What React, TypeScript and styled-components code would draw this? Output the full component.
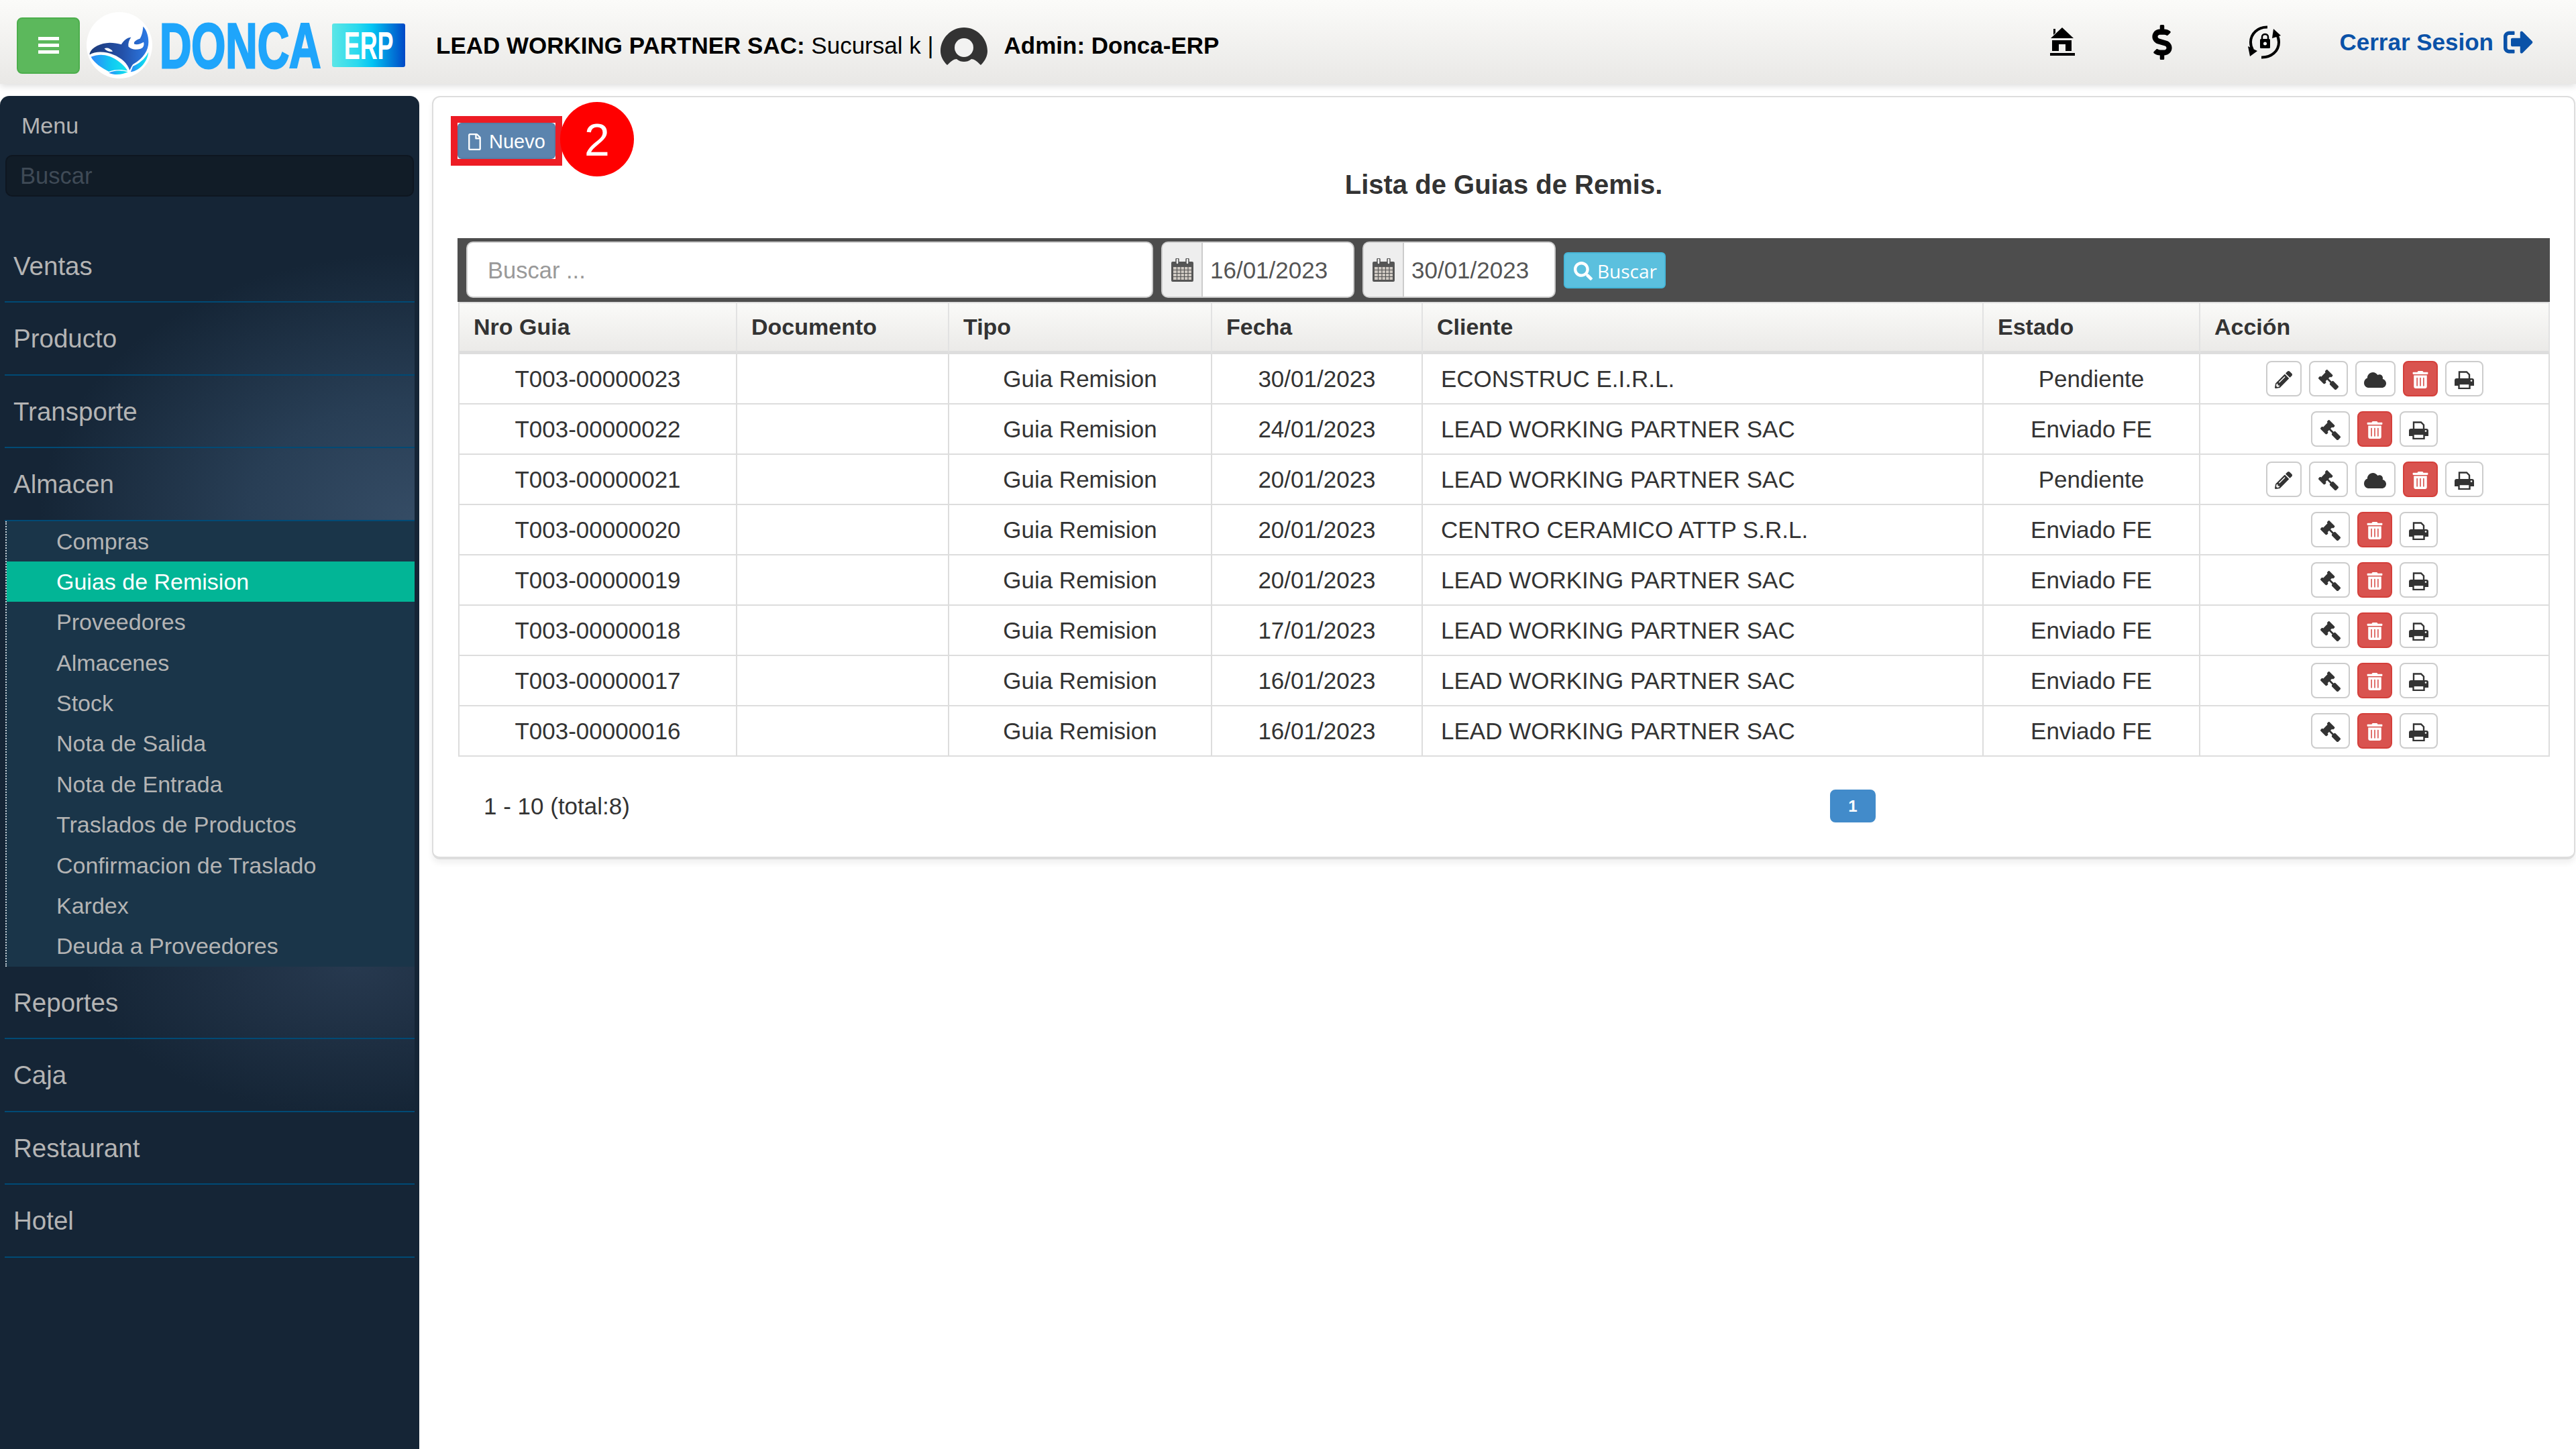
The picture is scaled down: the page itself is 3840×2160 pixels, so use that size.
import styled, { createGlobalStyle } from 'styled-components';
import {
  FaCloud,
  FaDollarSign,
  FaGavel,
  FaPencilAlt,
  FaRegFile,
  FaSearch,
  FaSignOutAlt,
  FaTrashAlt,
} from 'react-icons/fa';

const GlobalStyle = createGlobalStyle`
  html, body {
    margin: 0;
    padding: 0;
    background: #fff;
    font-family: "Liberation Sans", Arial, sans-serif;
    color: #333;
  }
  * { box-sizing: border-box; }
`;

const Page = styled.div`
  height: 100vh;
  overflow: hidden;
  display: flex;
  flex-direction: column;
`;

/* top bar */
const TopBar = styled.header`
  height: 125px;
  flex: none;
  display: flex;
  align-items: center;
  padding: 10px 64px 0 25px;
  background: linear-gradient(#fbfbf9, #e9e8e6);
  box-shadow: 0 3px 10px rgba(0, 0, 0, 0.14);
  position: relative;
`;

const MenuToggle = styled.button`
  width: 94px;
  height: 84px;
  padding: 0;
  display: flex;
  flex-direction: column;
  align-items: center;
  justify-content: center;
  gap: 5px;
  background: #5cb85c;
  border: 2px solid #4cae4c;
  border-radius: 8px;
`;

const ToggleBar = styled.span`
  width: 31px;
  height: 5px;
  background: #fff;
`;

const LogoMark = styled.svg`
  width: 98px;
  height: 99px;
  margin-left: 10px;
  flex: none;
`;

const LogoWord = styled.span`
  width: 244px;
  margin-left: 11px;
  flex: none;
  font-size: 95px;
  line-height: 84px;
  font-weight: 700;
  color: #1fa5fb;
  -webkit-text-stroke: 3px #1fa5fb;
  white-space: nowrap;
  transform: scaleX(0.69);
  transform-origin: left center;
`;

const LogoBadge = styled.span`
  width: 109px;
  height: 65px;
  margin-left: 13px;
  flex: none;
  display: flex;
  align-items: center;
  justify-content: center;
  border-radius: 3px;
  background: linear-gradient(90deg, #5ce6e6 0%, #2ad9ee 35%, #03c4f3 55%, #0048c6 100%);
  color: #fff;
  font-size: 58px;
  font-weight: 700;
  overflow: hidden;

  span {
    display: block;
    transform: scaleX(0.62);
  }
`;

const Company = styled.div`
  margin-left: 46px;
  display: flex;
  align-items: center;
  font-size: 35px;
  color: #000;
  white-space: nowrap;
`;

const Strong = styled.b`
  font-weight: 700;
`;

const Avatar = styled.svg`
  width: 72px;
  height: 72px;
  margin: 19px 24px 0 9px;
  flex: none;
`;

const TopNav = styled.nav`
  margin-left: auto;
  margin-bottom: 10px;
  display: flex;
  align-items: center;
`;

const TopIcon = styled.span<{ $gap: number }>`
  display: flex;
  margin-left: ${(p) => p.$gap}px;
  color: #000;
`;

const Logout = styled.a`
  margin-left: 85px;
  display: flex;
  align-items: center;
  gap: 15px;
  font-size: 35px;
  font-weight: 700;
  color: #0a52a8;
`;

/* sidebar */
const Body = styled.div`
  flex: 1;
  display: flex;
  align-items: flex-start;
  padding-top: 18px;
  min-height: 0;
`;

const Sidebar = styled.aside`
  width: 625px;
  height: 100%;
  flex: none;
  background: #152536;
  border-radius: 14px 14px 0 0;
  padding-right: 7px;
`;

const SideTitle = styled.div`
  height: 88px;
  line-height: 88px;
  padding-left: 32px;
  font-size: 34px;
  color: #b4b4b4;
`;

const SideSearch = styled.input`
  display: block;
  width: 609px;
  height: 62px;
  margin-left: 8px;
  padding: 0 20px;
  background: #111c27;
  border: 2px solid #0e1620;
  border-radius: 10px;
  font: 34.5px "Liberation Sans", Arial, sans-serif;
  color: #ccc;

  &::placeholder {
    color: #3f4a56;
    opacity: 1;
  }
`;

const SideNav = styled.nav`
  margin-top: 49.5px;
  padding-left: 7px;
`;

const NavGroup = styled.div<{ $glow: string }>`
  background: ${(p) => p.$glow};
`;

const NavItem = styled.div`
  height: 108.5px;
  line-height: 108px;
  padding-left: 13px;
  border-bottom: 2.5px solid #004a75;
  font-size: 38.5px;
  color: #b4b4b4;
`;

const SubList = styled.div`
  margin-left: 1px;
  background: #1a3549;
  border-left: 2px dotted #c8d0d6;
`;

const SubItem = styled.div<{ $active?: boolean }>`
  height: 60.4px;
  line-height: 60px;
  padding-left: 74px;
  font-size: 34px;
  color: ${(p) => (p.$active ? '#fff' : '#b4b4b4')};
  background: ${(p) => (p.$active ? '#02b596' : 'transparent')};
`;

/* main panel */
const Panel = styled.main`
  flex: 1;
  margin: 0 2px 0 19px;
  padding: 28px 36px 51px 36px;
  background: #fff;
  border: 2px solid #ddd;
  border-bottom-width: 4px;
  border-radius: 12px;
  box-shadow: 0 6px 8px rgba(0, 0, 0, 0.06);
`;

const NewWrap = styled.div`
  position: relative;
  width: 166px;
  height: 74px;
  margin-left: -10px;
  border: 10px solid #ed1c24;
`;

const NewButton = styled.button`
  width: 146px;
  height: 54px;
  padding: 3px 0 0 11px;
  display: flex;
  align-items: center;
  gap: 9px;
  background: #5b84ae;
  border: 2px solid #557da6;
  border-radius: 6px;
  color: #fff;
  font: 29px "Liberation Sans", Arial, sans-serif;
`;

const StepBadge = styled.span`
  position: absolute;
  left: 153px;
  top: -31px;
  width: 110px;
  height: 111px;
  display: flex;
  align-items: center;
  justify-content: center;
  border-radius: 50%;
  background: #ff0000;
  color: #fff;
  font-size: 68px;
`;

const Heading = styled.h1`
  margin: 8px 0 0;
  height: 40px;
  line-height: 40px;
  text-align: center;
  font-size: 40px;
  font-weight: 700;
  color: #333;
`;

const Toolbar = styled.div`
  margin-top: 60px;
  height: 95px;
  display: flex;
  align-items: flex-start;
  gap: 12px;
  padding: 5px 0 0 13px;
  background: #4d4d4d;
`;

const SearchInput = styled.input`
  width: 1024px;
  height: 84px;
  padding: 3px 30px 0;
  background: #fff;
  border: 2px solid #ccc;
  border-radius: 10px;
  font: 34.5px "Liberation Sans", Arial, sans-serif;
  color: #555;

  &::placeholder {
    color: #999;
    opacity: 1;
  }
`;

const DateGroup = styled.div`
  width: 288px;
  height: 84px;
  display: flex;
  background: #fff;
  border: 2px solid #ccc;
  border-radius: 10px;
  overflow: hidden;
`;

const DateAddon = styled.span`
  width: 60px;
  flex: none;
  display: flex;
  align-items: center;
  justify-content: center;
  background: #eee;
  border-right: 2px solid #ccc;
`;

const DateValue = styled.span`
  padding-left: 11px;
  line-height: 81px;
  font-size: 35px;
  color: #555;
`;

const SearchButton = styled.button`
  width: 152px;
  height: 54px;
  margin-top: 16px;
  padding: 2px 0 0 13px;
  display: flex;
  align-items: center;
  gap: 7px;
  background: #5bc0de;
  border: 2px solid #46b8da;
  border-radius: 6px;
  color: #fff;
  font: 28px "Open Sans", sans-serif;
`;

const Table = styled.table`
  width: 3118px;
  margin-left: 1px;
  table-layout: fixed;
  border-collapse: separate;
  border-spacing: 0;
`;

const Th = styled.th`
  height: 78px;
  padding: 0 0 0 21px;
  text-align: left;
  font-size: 34px;
  font-weight: 700;
  color: #333;
  background: linear-gradient(#fafaf8, #ebeae8);
  border-top: 2px solid #ddd;
  border-bottom: 5px solid #ddd;
  border-right: 2px solid #e2e2e2;

  &:first-child {
    border-left: 2px solid #ddd;
  }
`;

const Td = styled.td<{ $align?: string }>`
  height: 75px;
  padding: 0 0 0 ${(p) => (p.$align === 'left' ? '27px' : '0')};
  text-align: ${(p) => p.$align || 'center'};
  font-size: 35px;
  color: #333;
  border-bottom: 2px solid #ddd;
  border-right: 2px solid #ddd;

  &:first-child {
    border-left: 2px solid #ddd;
  }
`;

const Actions = styled.div`
  display: flex;
  justify-content: center;
  gap: 11px;
`;

const ActionButton = styled.button<{ $width: number; $danger?: boolean }>`
  width: ${(p) => p.$width}px;
  height: 53px;
  padding: 3px 0 0;
  display: flex;
  align-items: center;
  justify-content: center;
  border-radius: 8px;
  border: 2px solid ${(p) => (p.$danger ? '#d43f3a' : '#ccc')};
  background: ${(p) => (p.$danger ? '#d9534f' : '#fff')};
  color: ${(p) => (p.$danger ? '#fff' : '#333')};
`;

const GavelIcon = styled(FaGavel)`
  transform: scaleX(-1);
`;

const Footer = styled.div`
  margin-top: 49px;
  display: grid;
  grid-template-columns: 2046px auto;
  align-items: center;
`;

const PageInfo = styled.span`
  padding-left: 39px;
  font-size: 35px;
  color: #333;
`;

const PageButton = styled.button`
  width: 68px;
  height: 49px;
  padding: 0;
  background: #428bca;
  border: 2px solid #428bca;
  border-radius: 8px;
  color: #fff;
  font: 700 24px "Liberation Sans", Arial, sans-serif;
`;

function WhaleLogo() {
  return (
    <LogoMark viewBox="28 25 295 298">
      <defs>
        <linearGradient id="whaleBody" x1="0" x2="1" y1="0" y2="0">
          <stop offset="0" stopColor="#1d3a78" />
          <stop offset="0.55" stopColor="#2350a8" />
          <stop offset="1" stopColor="#2d7be6" />
        </linearGradient>
        <linearGradient id="whaleSea" x1="0" x2="1" y1="0" y2="0">
          <stop offset="0" stopColor="#2f86f8" />
          <stop offset="0.55" stopColor="#10c8f2" />
          <stop offset="1" stopColor="#18e6ee" />
        </linearGradient>
      </defs>
      <ellipse cx="175.5" cy="174" rx="147.5" ry="149" fill="#fff" />
      <path
        d="M48 226C90 208 130 218 160 238C185 255 200 268 212 288C190 283 160 280 128 292C96 276 62 254 48 226Z"
        fill="url(#whaleSea)"
      />
      <path d="M128 298C150 286 185 284 214 294C190 306 155 310 128 298Z" fill="url(#whaleSea)" />
      <path d="M236 268C262 256 288 240 306 204C302 244 272 286 226 294Z" fill="url(#whaleSea)" />
      <path
        d="M42 210C52 182 92 164 132 163C150 163 168 166 184 170C196 152 210 140 228 138C218 152 214 166 216 180C232 196 252 194 270 190C284 186 288 172 284 160C272 168 252 174 242 168C238 158 252 150 268 144C274 134 280 118 282 90C296 104 306 130 306 160C306 196 284 234 236 260C230 268 226 278 222 286C216 272 208 256 194 244C170 222 130 204 90 204C72 204 54 208 42 216Z"
        fill="url(#whaleBody)"
      />
      <path d="M108 188C120 182 136 188 146 202C130 204 116 198 108 188Z" fill="#fff" />
    </LogoMark>
  );
}

function UserAvatar() {
  return (
    <Avatar viewBox="0 0 72 72">
      <path
        d="M11 56C4 49 1 42 1 35C1 16 17 0 36 0C55 0 71 16 71 35C71 42 68 49 61 56C55 50 51 47 47 47C43 50 40 51 36 51C32 51 29 50 25 47C21 47 17 50 11 56Z"
        fill="#333"
      />
      <circle cx="36" cy="30" r="14" fill="#f2f2f1" />
    </Avatar>
  );
}

function HomeIcon() {
  return (
    <svg width="37" height="43" viewBox="12 12 37 43">
      <path d="M13 28L30 12L47 28Z" fill="#000" />
      <path d="M17 14H20V20L17 23Z" fill="#000" />
      <path d="M15 31H44V47H35V37H25V47H15Z" fill="#000" />
      <rect x="12" y="50" width="37" height="4" fill="#000" />
    </svg>
  );
}

function LockCycleIcon() {
  return (
    <svg width="52" height="52" viewBox="8 11 52 52">
      <path d="M38 14.5C24 14 13 24 13 37C13 41 14 45 16 48" fill="none" stroke="#000" strokeWidth="4" />
      <path d="M9 43L23 50L12 58Z" fill="#000" />
      <path d="M29 59.5C44 60 55 50 55 37C55 33 54 29 52 26" fill="none" stroke="#000" strokeWidth="4" />
      <path d="M47 17L58 27L45 31Z" fill="#000" />
      <rect x="27" y="32" width="15" height="14" rx="1.5" fill="#000" />
      <path d="M30 33V29C30 23.5 39 23.5 39 29V33" fill="none" stroke="#000" strokeWidth="2.5" />
      <circle cx="34.5" cy="39" r="2.5" fill="#fff" />
    </svg>
  );
}

function CalendarIcon() {
  return (
    <svg width="33" height="35" viewBox="0 0 33 35">
      <path d="M2 5H31Q33 5 33 7V33Q33 35 31 35H2Q0 35 0 33V7Q0 5 2 5Z" fill="#555" />
      <rect x="3" y="13" width="27" height="19" fill="#cfc9c2" />
      <path d="M3 17.5H30M3 22.5H30M3 27.5H30M8.5 13V32M14 13V32M19.5 13V32M25 13V32" stroke="#555" strokeWidth="1.2" />
      <rect x="7" y="0" width="4" height="9" rx="2" fill="#eee" stroke="#555" strokeWidth="1.5" />
      <rect x="22" y="0" width="4" height="9" rx="2" fill="#eee" stroke="#555" strokeWidth="1.5" />
    </svg>
  );
}

function PrintIcon() {
  return (
    <svg width="29" height="27" viewBox="0 0 29 27">
      <path d="M7 12V1.500H18L22 5.500V12" fill="#fff" stroke="#333" strokeWidth="2.400" />
      <path d="M3 11H26Q29 11 29 14V22H0V14Q0 11 3 11Z" fill="#333" />
      <circle cx="25" cy="14.500" r="1.300" fill="#fff" />
      <rect x="6.500" y="19" width="16" height="7" fill="#fff" stroke="#333" strokeWidth="2.400" />
    </svg>
  );
}

const mainTop = ['Ventas', 'Producto', 'Transporte', 'Almacen'];
const mainBottom = ['Reportes', 'Caja', 'Restaurant', 'Hotel'];
const subItems = [
  'Compras',
  'Guias de Remision',
  'Proveedores',
  'Almacenes',
  'Stock',
  'Nota de Salida',
  'Nota de Entrada',
  'Traslados de Productos',
  'Confirmacion de Traslado',
  'Kardex',
  'Deuda a Proveedores',
];

const columns = [
  { title: 'Nro Guia', width: 416 },
  { title: 'Documento', width: 316 },
  { title: 'Tipo', width: 392 },
  { title: 'Fecha', width: 314 },
  { title: 'Cliente', width: 836 },
  { title: 'Estado', width: 323 },
  { title: 'Acción', width: 521 },
];

const lead = 'LEAD WORKING PARTNER SAC';
const rows = [
  { nro: 'T003-00000023', fecha: '30/01/2023', cliente: 'ECONSTRUC E.I.R.L.', estado: 'Pendiente' },
  { nro: 'T003-00000022', fecha: '24/01/2023', cliente: lead, estado: 'Enviado FE' },
  { nro: 'T003-00000021', fecha: '20/01/2023', cliente: lead, estado: 'Pendiente' },
  { nro: 'T003-00000020', fecha: '20/01/2023', cliente: 'CENTRO CERAMICO ATTP S.R.L.', estado: 'Enviado FE' },
  { nro: 'T003-00000019', fecha: '20/01/2023', cliente: lead, estado: 'Enviado FE' },
  { nro: 'T003-00000018', fecha: '17/01/2023', cliente: lead, estado: 'Enviado FE' },
  { nro: 'T003-00000017', fecha: '16/01/2023', cliente: lead, estado: 'Enviado FE' },
  { nro: 'T003-00000016', fecha: '16/01/2023', cliente: lead, estado: 'Enviado FE' },
];

function App() {
  return (
    <Page>
      <GlobalStyle />
      <TopBar>
        <MenuToggle>
          <ToggleBar />
          <ToggleBar />
          <ToggleBar />
        </MenuToggle>
        <WhaleLogo />
        <LogoWord>DONCA</LogoWord>
        <LogoBadge>
          <span>ERP</span>
        </LogoBadge>
        <Company>
          <Strong>LEAD WORKING PARTNER SAC:</Strong>&nbsp;Sucursal k |
          <UserAvatar />
          <Strong>Admin: Donca-ERP</Strong>
        </Company>
        <TopNav>
          <TopIcon $gap={0}>
            <HomeIcon />
          </TopIcon>
          <TopIcon $gap={104}>
            <FaDollarSign size={52} />
          </TopIcon>
          <TopIcon $gap={101}>
            <LockCycleIcon />
          </TopIcon>
          <Logout>
            Cerrar Sesion <FaSignOutAlt size={44} />
          </Logout>
        </TopNav>
      </TopBar>
      <Body>
        <Sidebar>
          <SideTitle>Menu</SideTitle>
          <SideSearch placeholder="Buscar" />
          <SideNav>
            <NavGroup $glow="radial-gradient(ellipse 560px 400px at 100% 100%, #354c65 0%, #283e55 45%, rgba(21,37,54,0) 100%)">
              {mainTop.map((item) => (
                <NavItem key={item}>{item}</NavItem>
              ))}
            </NavGroup>
            <SubList>
              {subItems.map((item) => (
                <SubItem key={item} $active={item === 'Guias de Remision'}>
                  {item}
                </SubItem>
              ))}
            </SubList>
            <NavGroup $glow="radial-gradient(ellipse 400px 220px at 85% 0, #27394f 0%, rgba(21,37,54,0) 100%)">
              {mainBottom.map((item) => (
                <NavItem key={item}>{item}</NavItem>
              ))}
            </NavGroup>
          </SideNav>
        </Sidebar>
        <Panel>
          <NewWrap>
            <NewButton>
              <FaRegFile size={25} />
              Nuevo
            </NewButton>
            <StepBadge>2</StepBadge>
          </NewWrap>
          <Heading>Lista de Guias de Remis.</Heading>
          <Toolbar>
            <SearchInput placeholder="Buscar ..." />
            <DateGroup>
              <DateAddon>
                <CalendarIcon />
              </DateAddon>
              <DateValue>16/01/2023</DateValue>
            </DateGroup>
            <DateGroup>
              <DateAddon>
                <CalendarIcon />
              </DateAddon>
              <DateValue>30/01/2023</DateValue>
            </DateGroup>
            <SearchButton>
              <FaSearch size={28} />
              Buscar
            </SearchButton>
          </Toolbar>
          <Table>
            <colgroup>
              {columns.map((col) => (
                <col key={col.title} width={col.width} />
              ))}
            </colgroup>
            <thead>
              <tr>
                {columns.map((col) => (
                  <Th key={col.title}>{col.title}</Th>
                ))}
              </tr>
            </thead>
            <tbody>
              {rows.map((row) => (
                <tr key={row.nro}>
                  <Td>{row.nro}</Td>
                  <Td />
                  <Td>Guia Remision</Td>
                  <Td>{row.fecha}</Td>
                  <Td $align="left">{row.cliente}</Td>
                  <Td>{row.estado}</Td>
                  <Td>
                    <Actions>
                      {row.estado === 'Pendiente' && (
                        <ActionButton $width={53}>
                          <FaPencilAlt size={26} />
                        </ActionButton>
                      )}
                      <ActionButton $width={58}>
                        <GavelIcon size={30} />
                      </ActionButton>
                      {row.estado === 'Pendiente' && (
                        <ActionButton $width={60}>
                          <FaCloud size={33} />
                        </ActionButton>
                      )}
                      <ActionButton $width={52} $danger>
                        <FaTrashAlt size={26} />
                      </ActionButton>
                      <ActionButton $width={57}>
                        <PrintIcon />
                      </ActionButton>
                    </Actions>
                  </Td>
                </tr>
              ))}
            </tbody>
          </Table>
          <Footer>
            <PageInfo>1 - 10 (total:8)</PageInfo>
            <PageButton>1</PageButton>
          </Footer>
        </Panel>
      </Body>
    </Page>
  );
}

export default App;
